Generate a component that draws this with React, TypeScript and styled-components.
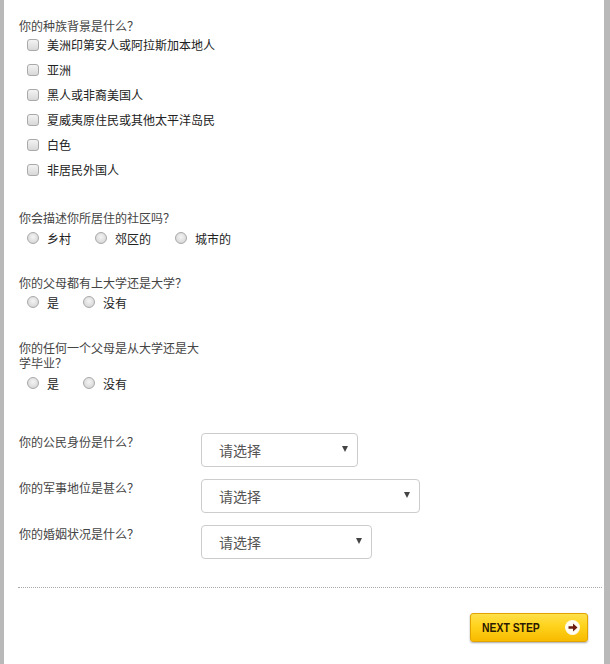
import React from 'react';
import styled, { createGlobalStyle } from 'styled-components';

const GlobalStyle = createGlobalStyle`
  html, body {
    margin: 0;
    padding: 0;
    background: #b9b9b9;
  }
  body {
    font-family: 'Noto Sans CJK SC', 'Liberation Sans', sans-serif;
  }
`;

const Page = styled.div`
  width: 600px;
  min-height: 100vh;
  margin-left: 4px;
  background: #ffffff;
  box-sizing: border-box;
  padding: 18px 16px 20px 15px;
`;

const Question = styled.div<{ $gap?: number }>`
  margin-bottom: ${(p) => p.$gap ?? 26}px;
`;

const Prompt = styled.div<{ $width?: number }>`
  font-size: 12px;
  line-height: 15px;
  color: #444;
  width: ${(p) => (p.$width ? `${p.$width}px` : 'auto')};
`;

const OptionList = styled.div<{ $inline?: boolean; $offset?: number }>`
  display: flex;
  flex-direction: ${(p) => (p.$inline ? 'row' : 'column')};
  padding-left: 8px;
  margin-top: ${(p) => p.$offset ?? 0}px;
`;

const Option = styled.label<{ $inline?: boolean }>`
  display: flex;
  align-items: center;
  height: ${(p) => (p.$inline ? 22 : 25)}px;
  margin-right: ${(p) => (p.$inline ? 24 : 0)}px;
  font-size: 12px;
  color: #222;
  cursor: pointer;
`;

const Box = styled.span<{ $round?: boolean }>`
  width: 12px;
  height: 12px;
  box-sizing: border-box;
  border: 1px solid #a9a9a9;
  border-radius: ${(p) => (p.$round ? '50%' : '3px')};
  background: ${(p) =>
    p.$round
      ? 'radial-gradient(circle at 50% 40%, #f4f4f4 0%, #dadada 70%, #cfcfcf 100%)'
      : 'linear-gradient(#f3f3f3, #d8d8d8)'};
  margin-right: 8px;
  flex-shrink: 0;
`;

const SelectRow = styled.div`
  display: flex;
  align-items: flex-start;
  margin-bottom: 12px;
`;

const SelectLabel = styled.div`
  width: 182px;
  font-size: 12px;
  line-height: 15px;
  color: #444;
  padding-top: 1px;
`;

const Select = styled.div<{ $width: number }>`
  width: ${(p) => p.$width}px;
  height: 34px;
  box-sizing: border-box;
  border: 1px solid #cccccc;
  border-radius: 4px;
  display: flex;
  align-items: center;
  justify-content: space-between;
  padding: 0 9px 0 17px;
  font-size: 14px;
  color: #555;
`;

const Caret = styled.span`
  width: 0;
  height: 0;
  border-left: 3.5px solid transparent;
  border-right: 3.5px solid transparent;
  border-top: 6px solid #444;
  margin-top: -2px;
`;

const Divider = styled.div`
  border-top: 1px dotted #a8a8a8;
  margin: 28px -14px 25px -1px;
`;

const Footer = styled.div`
  display: flex;
  justify-content: flex-end;
`;

const NextButton = styled.button`
  width: 118px;
  height: 29px;
  box-sizing: border-box;
  border: 1px solid #e0a300;
  border-radius: 3px;
  background: linear-gradient(#ffe04a 0%, #ffd21c 45%, #f7bb00 100%);
  box-shadow: 0 1px 2px rgba(0, 0, 0, 0.35);
  display: flex;
  align-items: center;
  justify-content: space-between;
  padding: 0 7px 0 11px;
  font-family: 'Liberation Sans', sans-serif;
  font-weight: bold;
  font-size: 13px;
  color: #2b1a00;
  cursor: pointer;
`;

const ButtonText = styled.span`
  display: inline-block;
  transform: scaleX(0.8);
  transform-origin: left center;
  white-space: nowrap;
`;

const ArrowDot = styled.span`
  width: 15px;
  height: 15px;
  border-radius: 50%;
  background: #fffdf2;
  display: flex;
  align-items: center;
  justify-content: center;
`;

const ethnicities = [
  '美洲印第安人或阿拉斯加本地人',
  '亚洲',
  '黑人或非裔美国人',
  '夏威夷原住民或其他太平洋岛民',
  '白色',
  '非居民外国人',
];

const selects = [
  { label: '你的公民身份是什么？', width: 157 },
  { label: '你的军事地位是甚么？', width: 219 },
  { label: '你的婚姻状况是什么？', width: 171 },
];

const RadioGroup = ({ options, offset }: { options: string[]; offset: number }) => (
  <OptionList $inline $offset={offset}>
    {options.map((o) => (
      <Option $inline key={o}>
        <Box $round />
        {o}
      </Option>
    ))}
  </OptionList>
);

const App = (): JSX.Element => {
  return (
    <>
      <GlobalStyle />
      <Page>
        <Question $gap={28}>
          <Prompt>你的种族背景是什么？</Prompt>
          <OptionList $offset={-1}>
            {ethnicities.map((e) => (
              <Option key={e}>
                <Box />
                {e}
              </Option>
            ))}
          </OptionList>
        </Question>

        <Question $gap={26}>
          <Prompt>你会描述你所居住的社区吗？</Prompt>
          <RadioGroup options={['乡村', '郊区的', '城市的']} offset={2} />
        </Question>

        <Question $gap={27}>
          <Prompt>你的父母都有上大学还是大学？</Prompt>
          <RadioGroup options={['是', '没有']} offset={1} />
        </Question>

        <Question $gap={39}>
          <Prompt $width={185}>你的任何一个父母是从大学还是大学毕业？</Prompt>
          <RadioGroup options={['是', '没有']} offset={2} />
        </Question>

        {selects.map((s) => (
          <SelectRow key={s.label}>
            <SelectLabel>{s.label}</SelectLabel>
            <Select $width={s.width}>
              <span>请选择</span>
              <Caret />
            </Select>
          </SelectRow>
        ))}

        <Divider />

        <Footer>
          <NextButton>
            <ButtonText>NEXT STEP</ButtonText>
            <ArrowDot>
              <svg width="10" height="9" viewBox="0 0 10 9">
                <path d="M0.5 3.3 H5 V0.6 L9.5 4.5 L5 8.4 V5.7 H0.5 Z" fill="#6b1d0f" />
              </svg>
            </ArrowDot>
          </NextButton>
        </Footer>
      </Page>
    </>
  );
};

export default App;
